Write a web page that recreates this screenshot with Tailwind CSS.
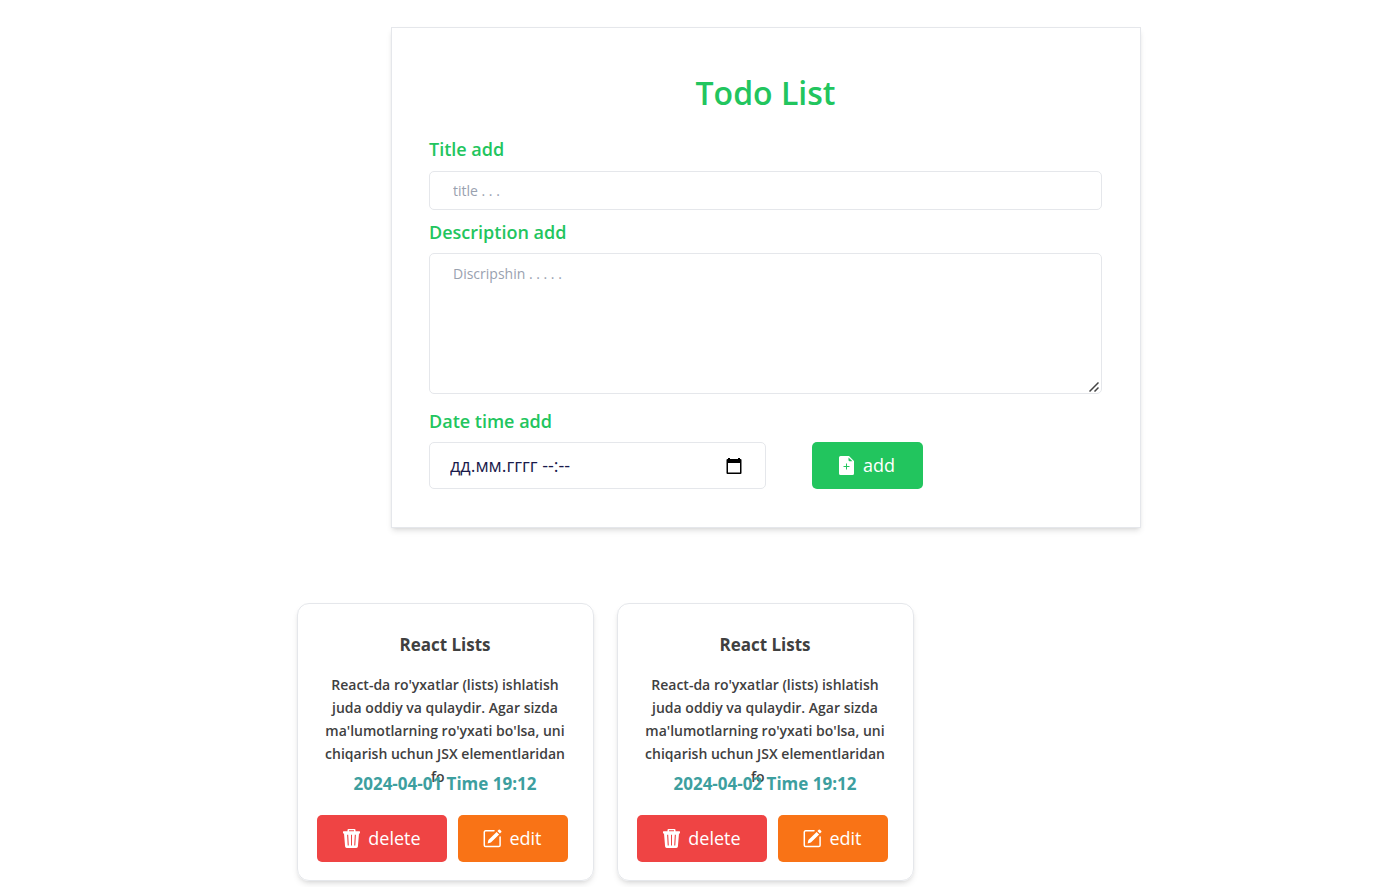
<!DOCTYPE html>
<html lang="uz">
<head>
<meta charset="utf-8">
<meta name="viewport" content="width=device-width, initial-scale=1">
<title>Todo List</title>
<script src="https://cdn.jsdelivr.net/npm/@tailwindcss/browser@4"></script>
</head>
<body class="min-h-screen bg-white font-['Segoe_UI','Open_Sans','Noto_Sans',sans-serif] text-[#404040]">
<svg class="hidden" aria-hidden="true">
  <symbol id="trash" viewBox="0 0 19 19"><path fill-rule="evenodd" d="M6.500 0h6a1 1 0 0 1 1 1v1.300H17.500a.5.5 0 0 1 .5.5v1.200a.5.5 0 0 1-.5.5H17l-1.100 13a1.600 1.600 0 0 1-1.600 1.500H4.700A1.600 1.600 0 0 1 3.100 17.500L2 4.500H1.500A.5.5 0 0 1 1 4V2.800a.5.5 0 0 1 .5-.5h4V1a1 1 0 0 1 1-1m.5 1.300v1h5v-1zM5.100 5.800l.6 10.700h1.100L6.200 5.800zM9 5.800v10.700h1V5.800zM12.800 5.800l-.6 10.700h1.100l.6-10.700z"/></symbol>
  <symbol id="pencil" viewBox="0 0 19 19"><path d="M15.700.8a.8.8 0 0 1 1.200 0l1.300 1.300a.8.8 0 0 1 0 1.200l-1.300 1.300-2.500-2.500zM13.600 2.900l2.500 2.500-8.200 8.200-3.300.9.800-3.400z"/><path d="M11 1.800H2.600A1.300 1.300 0 0 0 1.300 3.100v13.200a1.300 1.300 0 0 0 1.300 1.300h13.200a1.300 1.300 0 0 0 1.300-1.300V8" fill="none" stroke="currentColor" stroke-width="1.500" stroke-linecap="round"/></symbol>
</svg>
<main class="pt-[27px] pb-[6px] pl-[135px]">
  <form class="mx-auto flex max-w-[750px] flex-col border border-gray-200 pr-[38px] pl-[37px] pt-[42px] pb-[38px] shadow-md">
    <h1 class="text-center text-[32px] leading-[46px] font-semibold text-[#22c55e]">Todo List</h1>
    <label for="title" class="mt-[20px] text-[18px] leading-[27px] font-semibold text-[#22c55e]">Title add</label>
    <input id="title" type="text" placeholder="title . . ." class="mt-2 h-[39px] w-full rounded-[5px] border border-gray-200 px-[23px] text-[14px] placeholder:text-gray-400">
    <label for="desc" class="mt-[9px] text-[18px] leading-[27px] font-semibold text-[#22c55e]">Description add</label>
    <div class="relative mt-[7px] flex">
      <textarea id="desc" placeholder="Discripshin . . . . ." class="h-[141px] w-full resize rounded-[5px] border border-gray-200 px-[23px] py-[8px] text-[14px] leading-[23px] placeholder:text-gray-400 [&::-webkit-resizer]:hidden"></textarea>
      <svg class="pointer-events-none absolute right-[3px] bottom-[2px] size-[10px]" viewBox="0 0 10 10" stroke="#444" stroke-width="1.500" fill="none" aria-hidden="true"><path d="M.5 9.500l9-9M5.500 9.500l4-4"/></svg>
    </div>
    <label for="date" class="mt-[14px] text-[18px] leading-[27px] font-semibold text-[#22c55e]">Date time add</label>
    <div class="mt-[7px] flex gap-[46px]">
      <div class="flex h-[47px] w-1/2 items-center rounded-[5px] border border-gray-200 pr-[22px] pl-[20px]">
        <input id="date" type="text" placeholder="дд.мм.гггг --:--" class="min-w-0 flex-1 text-[18px] outline-none placeholder:text-[#1a1a4b]">
        <button type="button" aria-label="Pick a date" class="text-black"><svg class="size-[18px]" viewBox="0 0 18 18" fill="currentColor"><path fill-rule="evenodd" d="M3 1h2v1h8V1h2v1h.500a1 1 0 0 1 1 1v13a1 1 0 0 1-1 1h-13a1 1 0 0 1-1-1V3a1 1 0 0 1 1-1H3zM3 6v9.500h12V6z"/></svg></button>
      </div>
      <button type="button" class="flex h-[47px] w-[111px] items-center justify-center gap-[9px] rounded-[5px] bg-[#22c55e] text-[18px] text-white">
        <svg class="h-[19px] w-[15px]" viewBox="0 0 15 19" fill="currentColor"><path fill-rule="evenodd" d="M1.500 0H10l5 5v12.500a1.500 1.500 0 0 1-1.500 1.500h-12A1.500 1.500 0 0 1 0 17.500v-16A1.500 1.500 0 0 1 1.500 0M9.500 1.500V4a1.200 1.200 0 0 0 1.200 1.200h2.800zM7 7.500V10H4.500v1H7v2.500h1V11h2.500v-1H8V7.500z"/></svg>add</button>
    </div>
  </form>
  <section class="mx-auto mt-[75px] flex max-w-[939px] flex-wrap gap-[23px]">
    <article class="w-[297px] rounded-[12px] border border-gray-200 px-[19px] pt-[27px] pb-[18px] shadow-md">
      <h2 class="text-center text-[17px] leading-[27px] font-bold">React Lists</h2>
      <p class="mt-[15px] h-[98px] px-[5px] text-center text-[14px] leading-[23px] font-semibold">React-da ro'yxatlar (lists) ishlatish juda oddiy va qulaydir. Agar sizda ma'lumotlarning ro'yxati bo'lsa, uni chiqarish uchun JSX elementlaridan fo&nbsp;&nbsp;&nbsp;&nbsp;</p>
      <p class="text-center text-[17px] leading-[25px] font-bold text-[#3d9f9f]">2024-04-01 Time 19:12</p>
      <div class="mt-[19px] flex gap-[11px]">
        <button type="button" class="flex h-[47px] w-[130px] items-center justify-center gap-[7px] rounded-[5px] bg-[#ef4444] text-[18px] text-white"><svg class="size-[19px]" fill="currentColor"><use href="#trash"/></svg>delete</button>
        <button type="button" class="flex h-[47px] w-[110px] items-center justify-center gap-[7px] rounded-[5px] bg-[#f97316] text-[18px] text-white"><svg class="size-[19px]" fill="currentColor"><use href="#pencil"/></svg>edit</button>
      </div>
    </article>
    <article class="w-[297px] rounded-[12px] border border-gray-200 px-[19px] pt-[27px] pb-[18px] shadow-md">
      <h2 class="text-center text-[17px] leading-[27px] font-bold">React Lists</h2>
      <p class="mt-[15px] h-[98px] px-[5px] text-center text-[14px] leading-[23px] font-semibold">React-da ro'yxatlar (lists) ishlatish juda oddiy va qulaydir. Agar sizda ma'lumotlarning ro'yxati bo'lsa, uni chiqarish uchun JSX elementlaridan fo&nbsp;&nbsp;&nbsp;&nbsp;</p>
      <p class="text-center text-[17px] leading-[25px] font-bold text-[#3d9f9f]">2024-04-02 Time 19:12</p>
      <div class="mt-[19px] flex gap-[11px]">
        <button type="button" class="flex h-[47px] w-[130px] items-center justify-center gap-[7px] rounded-[5px] bg-[#ef4444] text-[18px] text-white"><svg class="size-[19px]" fill="currentColor"><use href="#trash"/></svg>delete</button>
        <button type="button" class="flex h-[47px] w-[110px] items-center justify-center gap-[7px] rounded-[5px] bg-[#f97316] text-[18px] text-white"><svg class="size-[19px]" fill="currentColor"><use href="#pencil"/></svg>edit</button>
      </div>
    </article>
  </section>
</main>
</body>
</html>
